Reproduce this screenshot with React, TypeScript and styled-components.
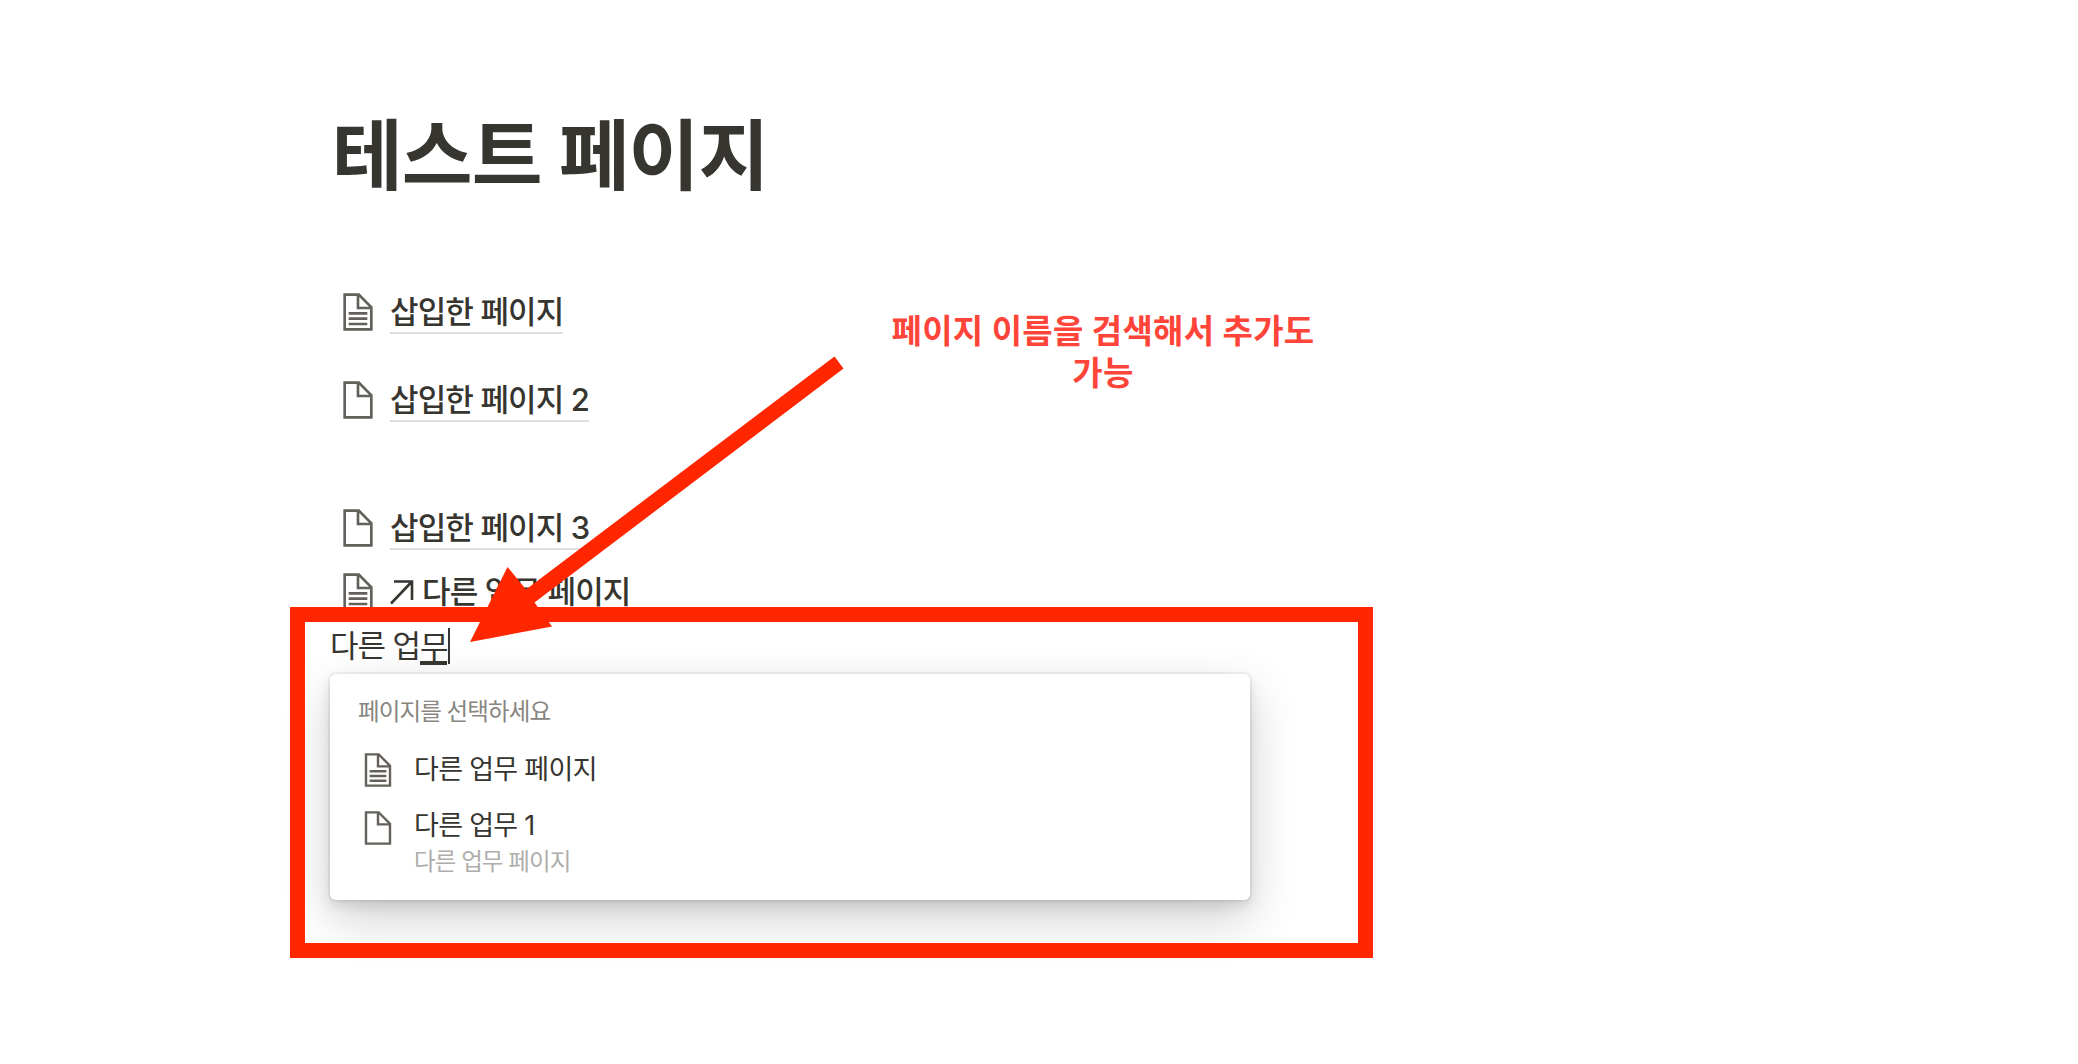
import React from "react";
import styled, { createGlobalStyle } from "styled-components";

const GlobalStyle = createGlobalStyle`
  body {
    margin: 0;
    background: #fff;
    color: #37352f;
    font-family: Inter, "Noto Sans CJK KR", sans-serif;
  }

  * {
    box-sizing: border-box;
  }
`;

const Page = styled.main`
  position: relative;
  height: 1064px;
  padding: 108px 0 0 330px;
  overflow: hidden;
`;

const Title = styled.h1`
  height: 96px;
  margin: 0 0 76px 2px;
  font-size: 77px;
  line-height: 96px;
  font-weight: 700;
  letter-spacing: -1px;
  white-space: nowrap;
`;

const PageRow = styled.div<{ $gap?: number }>`
  display: flex;
  align-items: center;
  height: 64px;
  margin-bottom: ${({ $gap }) => $gap || 0}px;
  padding-left: 8px;
`;

const RowIcon = styled.span`
  display: flex;
  margin-right: 12px;
`;

const PageName = styled.span<{ $link?: boolean }>`
  height: 44px;
  border-bottom: 2px solid ${({ $link }) => ($link ? "transparent" : "#dddddc")};
  font-size: 31px;
  line-height: 44px;
  font-weight: 500;
  letter-spacing: -0.85px;
  white-space: nowrap;
`;

const LinkArrow = styled.svg`
  display: block;
  margin-right: 8px;
`;

const Editing = styled.div`
  display: flex;
  align-items: center;
  height: 44px;
  margin-bottom: 6px;
  font-size: 31px;
  line-height: 44px;
  letter-spacing: -1.1px;
  white-space: pre;
`;

const Composing = styled.span`
  height: 37px;
  border-bottom: 4px solid #37352f;
  line-height: 37px;
`;

const Caret = styled.span`
  width: 2px;
  height: 36px;
  margin-left: 1px;
  background: #37352f;
`;

const Menu = styled.div`
  width: 920px;
  height: 226px;
  padding: 20px 28px;
  border-radius: 6px;
  background: #fff;
  box-shadow: 0 0 0 2px rgba(15, 15, 15, 0.05), 0 6px 12px rgba(15, 15, 15, 0.1),
    0 18px 48px rgba(15, 15, 15, 0.2);
`;

const MenuLabel = styled.div`
  height: 36px;
  margin-bottom: 6px;
  font-size: 23.5px;
  line-height: 36px;
  letter-spacing: -0.9px;
  color: #87867f;
`;

const MenuItem = styled.div`
  display: flex;
  gap: 18px;
  height: 56px;
  padding: 13px 0 0 2px;
`;

const ItemIcon = styled.span<{ $offset: number }>`
  padding-top: ${({ $offset }) => $offset}px;
`;

const ItemText = styled.div`
  font-size: 27px;
  line-height: 42px;
  letter-spacing: -0.7px;
`;

const ItemParent = styled.div`
  font-size: 23.5px;
  line-height: 29px;
  letter-spacing: -0.9px;
  color: #afaeac;
`;

const Annotation = styled.div`
  position: absolute;
  top: 310px;
  left: 880px;
  width: 446px;
  color: #ff453a;
  font-size: 33px;
  font-weight: 700;
  line-height: 42px;
  letter-spacing: 0.3px;
  text-align: center;
  word-break: keep-all;
`;

const Highlight = styled.div`
  position: absolute;
  top: 607px;
  left: 290px;
  width: 1083px;
  height: 351px;
  border: 15px solid #ff2600;
`;

const Pointer = styled.svg`
  position: absolute;
  top: 340px;
  left: 460px;
`;

const outline =
  "M16,1H4v28h22V11L16,1z M16,3.828L23.172,11H16V3.828z M24,27H6V3h8v10h10V27z";
const lines = "M8,17h14v-2H8V17z M8,21h14v-2H8V21z M8,25h14v-2H8V25z";

const PageIcon: React.FC<{ size: number; filled?: boolean }> = ({ size, filled }) => (
  <svg width={size} height={size} viewBox="0 0 30 30" fill="#64605b" display="block">
    <path d={outline} />
    {filled && <path d={lines} />}
  </svg>
);

const rows = [
  { name: "삽입한 페이지", filled: true, gap: 24 },
  { name: "삽입한 페이지 2", gap: 64 },
  { name: "삽입한 페이지 3" },
  { name: "다른 업무 페이지", filled: true, link: true },
];

const App: React.FC = () => {
  return (
    <Page>
      <GlobalStyle />
      <Title>테스트 페이지</Title>
      {rows.map((row) => (
        <PageRow key={row.name} $gap={row.gap}>
          <RowIcon>
            <PageIcon size={40} filled={row.filled} />
          </RowIcon>
          {row.link && (
            <LinkArrow width="24" height="26" viewBox="0 0 24 26" fill="none" stroke="#37352f" strokeWidth="2.6">
              <path d="M1 24.5L22 2.5M4 2.5H22V21" />
            </LinkArrow>
          )}
          <PageName $link={row.link}>{row.name}</PageName>
        </PageRow>
      ))}

      <Editing>
        <span>다른 업</span>
        <Composing>무</Composing>
        <Caret />
      </Editing>
      <Menu>
        <MenuLabel>페이지를 선택하세요</MenuLabel>
        <MenuItem>
          <ItemIcon $offset={3}>
            <PageIcon size={36} filled />
          </ItemIcon>
          <ItemText>다른 업무 페이지</ItemText>
        </MenuItem>
        <MenuItem>
          <ItemIcon $offset={5}>
            <PageIcon size={36} />
          </ItemIcon>
          <ItemText>
            다른 업무 1<ItemParent>다른 업무 페이지</ItemParent>
          </ItemText>
        </MenuItem>
      </Menu>

      <Annotation>페이지 이름을 검색해서 추가도 가능</Annotation>
      <Highlight />
      <Pointer width="400" height="310" viewBox="0 0 400 310" fill="#ff2600">
        <path d="M374.5 16.5L383.5 28.5L74.5 262.5L92 286.5L10 302L47.5 227L66 249.5Z" />
      </Pointer>
    </Page>
  );
};

export default App;
